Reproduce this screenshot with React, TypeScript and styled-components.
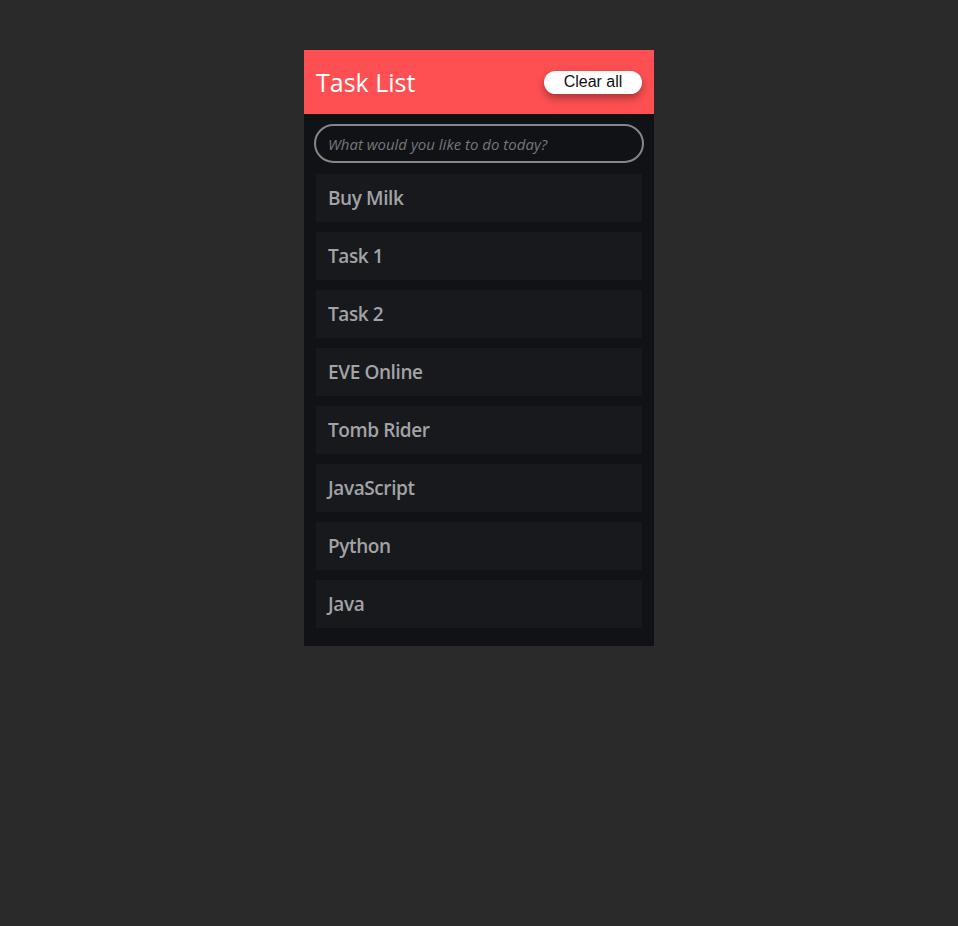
import styled, { createGlobalStyle } from 'styled-components';

const tasks = ['Buy Milk', 'Task 1', 'Task 2', 'EVE Online', 'Tomb Rider', 'JavaScript', 'Python', 'Java'];

const GlobalStyle = createGlobalStyle`
	body {
		margin: 0;
		background: #2a2a2a;
		font-family: 'Open Sans', sans-serif;
	}
`;

const Page = styled.div`
	display: flex;
	justify-content: center;
	align-items: flex-start;
	padding-top: 50px;
	min-height: 876px;
`;

const Panel = styled.div`
	width: 350px;
	background: #111216;
	display: flex;
	flex-direction: column;
`;

const Header = styled.header`
	height: 64px;
	background: #fe5052;
	display: flex;
	align-items: center;
	justify-content: space-between;
	padding: 0 12px;
	box-sizing: border-box;
`;

const Title = styled.h1`
	margin: 0;
	color: #ffffff;
	font-size: 25px;
	font-weight: 400;
	font-family: 'Open Sans', sans-serif;
`;

const ClearButton = styled.button`
	width: 98px;
	height: 23px;
	border: none;
	border-radius: 12px;
	background: #ffffff;
	color: #111;
	font-family: 'Liberation Sans', Arial, sans-serif;
	font-size: 16px;
	padding: 0 0 1px 0;
	box-shadow: 0 4px 8px rgba(0, 0, 0, 0.35);
	cursor: pointer;
`;

const Body = styled.div`
	display: flex;
	flex-direction: column;
	gap: 10px;
	padding: 10px 12px 18px;
`;

const Input = styled.input`
	height: 39px;
	margin: 0 -2px 1px;
	box-sizing: border-box;
	border: 2px solid #85868a;
	border-radius: 20px;
	background: #111216;
	padding: 0 12px;
	font-family: 'Open Sans', sans-serif;
	font-size: 15px;
	font-style: italic;
	color: #ccc;
	outline: none;

	&::placeholder {
		color: #75767b;
	}
`;

const Item = styled.div`
	height: 48px;
	background: #18191d;
	display: flex;
	align-items: center;
	padding: 0 12px;
	color: #a2a3a6;
	font-size: 19px;
	font-weight: 600;
	letter-spacing: -0.4px;
`;

const App = () => {
	return (
		<>
			<GlobalStyle />
			<Page>
				<Panel>
					<Header>
						<Title>Task List</Title>
						<ClearButton>Clear all</ClearButton>
					</Header>
					<Body>
						<Input placeholder="What would you like to do today?" />
						{tasks.map((task) => (
							<Item key={task}>{task}</Item>
						))}
					</Body>
				</Panel>
			</Page>
		</>
	);
};

export default App;
